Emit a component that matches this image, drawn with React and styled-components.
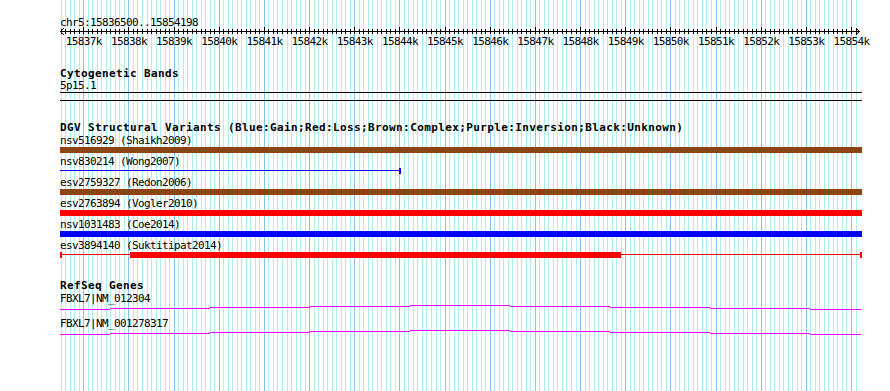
import React from 'react';
import styled, { createGlobalStyle } from 'styled-components';

const START = 15836500;
const END = 15854198;
const X0 = 60.7;
const PX_PER_BP = 0.04516;
const LEFT = 60;
const xOf = (bp) => X0 + (bp - START) * PX_PER_BP;

const GlobalStyle = createGlobalStyle`
  html, body { margin: 0; padding: 0; background: #fff; }
`;

const Canvas = styled.div`
  position: relative;
  width: 890px;
  height: 391px;
  overflow: hidden;
  background: #fff;
  color: #000;
  font-family: "DejaVu Sans Mono", "Liberation Mono", monospace;
`;

const GridLayer = styled.svg`
  position: absolute;
  left: 0;
  top: 0;
  width: 890px;
  height: 391px;
  pointer-events: none;
`;

const Tracks = styled.div`
  position: relative;
  display: flex;
  flex-direction: column;
  padding: 16px 0 0 ${LEFT}px;
`;

const Section = styled.section`
  display: flex;
  flex-direction: column;
  margin-top: ${(p) => p.$top || 0}px;
`;

const Label = styled.div`
  font-size: 11px;
  letter-spacing: -0.62px;
  line-height: 13px;
  height: 13px;
  white-space: pre;
`;

const Title = styled.div`
  font-size: 11px;
  font-weight: bold;
  letter-spacing: 0.38px;
  line-height: ${(p) => p.$h || 12}px;
  height: ${(p) => p.$h || 12}px;
  white-space: pre;
`;

const Glyph = styled.svg`
  display: block;
  width: 802px;
  height: ${(p) => p.$h}px;
  overflow: visible;
  margin-bottom: ${(p) => p.$after || 0}px;
`;

const TickRow = styled.div`
  position: relative;
  height: 13px;
  width: 802px;
`;

const TickLabel = styled.span`
  position: absolute;
  top: 0;
  font-size: 11px;
  letter-spacing: -0.62px;
  line-height: 13px;
  white-space: pre;
  transform: translateX(-50%);
`;

const FeatureRow = styled.div`
  display: flex;
  flex-direction: column;
`;

const minorLines = [];
for (let bp = START; bp <= END; bp += 100) {
  minorLines.push({ x: Math.round(xOf(bp)), major: bp % 1000 === 0 });
}
const majors = [];
for (let k = 15837; k <= 15854; k++) majors.push({ k, x: xOf(k * 1000) });

function Grid() {
  return (
    <GridLayer viewBox="0 0 890 391" shapeRendering="crispEdges">
      {minorLines.map((l, i) => (
        <rect key={i} x={l.x} y={0} width={1} height={391} fill={l.major ? '#88c2f0' : '#aeeef0'} />
      ))}
    </GridLayer>
  );
}

function Ruler() {
  return (
    <Glyph $h={6} viewBox="0 0 802 6">
      <rect x={0} y={2} width={800} height={1} fill="#000" shapeRendering="crispEdges" />
      {minorLines.map((l, i) => (
        <rect
          key={i}
          x={l.x - LEFT}
          y={l.major ? -2 : 0}
          width={1}
          height={l.major ? 7 : 5}
          fill="#000"
          shapeRendering="crispEdges"
        />
      ))}
      <polyline points="4,-1 0.5,2.5 4,6" fill="none" stroke="#000" strokeWidth="1" />
      <polyline points="796,-1 799.5,2.5 796,6" fill="none" stroke="#000" strokeWidth="1" />
    </Glyph>
  );
}

const FullBar = ({ color }) => (
  <Glyph $h={6} $after={2} viewBox="0 0 802 6" shapeRendering="crispEdges">
    <rect x={0} y={0} width={802} height={6} fill={color} />
  </Glyph>
);

const WongGlyph = () => (
  <Glyph $h={6} $after={2} viewBox="0 0 802 6" shapeRendering="crispEdges">
    <rect x={0} y={2} width={340} height={1} fill="#0000ff" />
    <rect x={339} y={0} width={2} height={6} fill="#0000ff" />
  </Glyph>
);

const SuktitipatGlyph = () => (
  <Glyph $h={6} $after={2} viewBox="0 0 802 6" shapeRendering="crispEdges">
    <rect x={0} y={0} width={2} height={6} fill="#ff0000" />
    <rect x={2} y={2} width={798} height={1} fill="#ff0000" />
    <rect x={70} y={0} width={491} height={6} fill="#ff0000" />
    <rect x={800} y={0} width={2} height={6} fill="#ff0000" />
  </Glyph>
);

const hatSegments = [
  [0, 50, 4], [50, 150, 3], [150, 250, 2], [250, 350, 1], [350, 450, 0],
  [450, 550, 1], [550, 650, 2], [650, 750, 3], [750, 801, 4],
];

const GeneGlyph = () => (
  <Glyph $h={12} viewBox="0 0 802 12" shapeRendering="crispEdges">
    {hatSegments.map(([a, b, y], i) => (
      <rect key={i} x={a} y={y} width={b - a} height={1} fill="#ff00ff" />
    ))}
  </Glyph>
);

const variants = [
  { name: 'nsv516929 (Shaikh2009)', glyph: <FullBar color="#8b4513" /> },
  { name: 'nsv830214 (Wong2007)', glyph: <WongGlyph /> },
  { name: 'esv2759327 (Redon2006)', glyph: <FullBar color="#8b4513" /> },
  { name: 'esv2763894 (Vogler2010)', glyph: <FullBar color="#ff0000" /> },
  { name: 'nsv1031483 (Coe2014)', glyph: <FullBar color="#0000ff" /> },
  { name: 'esv3894140 (Suktitipat2014)', glyph: <SuktitipatGlyph /> },
];

const genes = ['FBXL7|NM_012304', 'FBXL7|NM_001278317'];

export default function App() {
  return (
    <>
      <GlobalStyle />
      <Canvas>
        <Grid />
        <Tracks>
          <Section>
            <Label>chr5:15836500..15854198</Label>
            <Ruler />
            <TickRow>
              {majors.map((m) => (
                <TickLabel key={m.k} style={{ left: `${m.x - LEFT + 0.5}px` }}>
                  {`${m.k}k`}
                </TickLabel>
              ))}
            </TickRow>
          </Section>

          <Section $top={21}>
            <Title $h={10}>Cytogenetic Bands</Title>
            <Label>5p15.1</Label>
            <Glyph $h={10} viewBox="0 0 802 10" shapeRendering="crispEdges">
              <rect x={0} y={0} width={802} height={1} fill="#000" />
              <rect x={0} y={8} width={802} height={1} fill="#000" />
            </Glyph>
          </Section>

          <Section $top={20}>
            <Title>DGV Structural Variants (Blue:Gain;Red:Loss;Brown:Complex;Purple:Inversion;Black:Unknown)</Title>
            {variants.map((v) => (
              <FeatureRow key={v.name}>
                <Label>{v.name}</Label>
                {v.glyph}
              </FeatureRow>
            ))}
          </Section>

          <Section $top={20}>
            <Title>RefSeq Genes</Title>
            {genes.map((g) => (
              <FeatureRow key={g}>
                <Label>{g}</Label>
                <GeneGlyph />
              </FeatureRow>
            ))}
          </Section>
        </Tracks>
      </Canvas>
    </>
  );
}
